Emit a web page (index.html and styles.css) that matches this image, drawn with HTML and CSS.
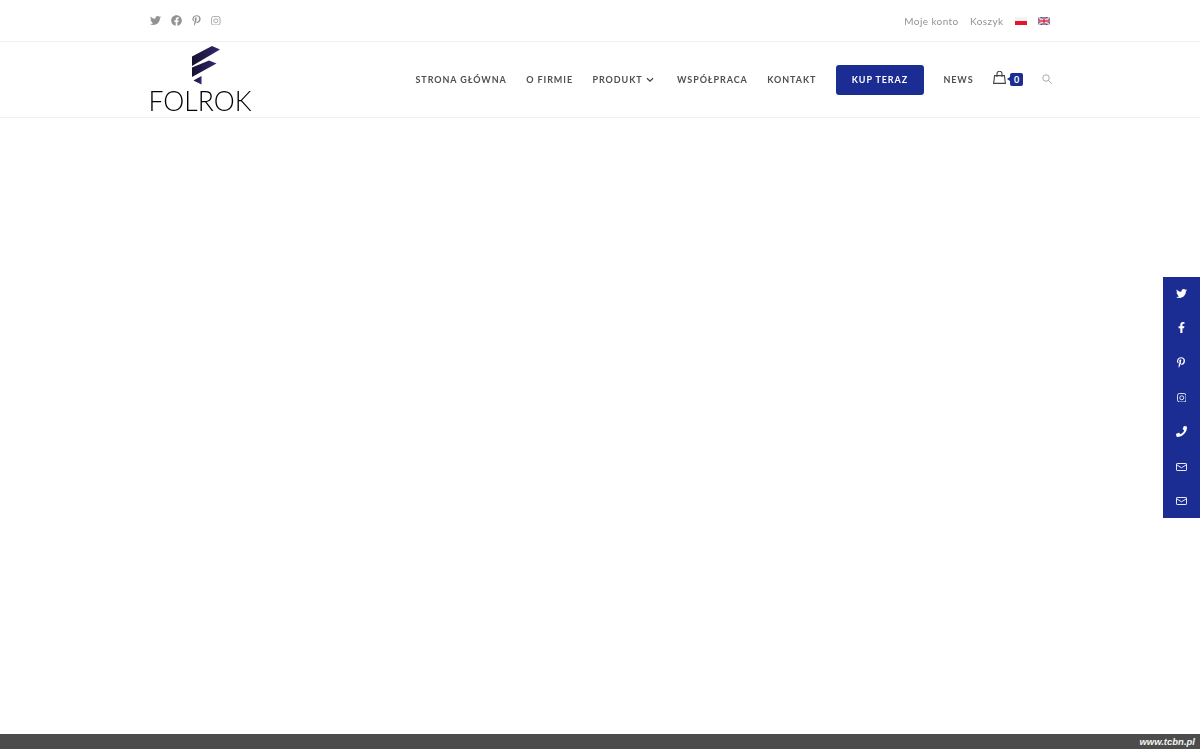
FILE: index.html
```html
<!DOCTYPE html>
<html lang="pl">
<head>
<meta charset="utf-8">
<title>Folrok</title>
<link rel="stylesheet" href="styles.css">
</head>
<body>
<div class="topbar">
  <div class="container topbar-inner">
    <div class="social">
      <svg class="ico-tw" viewBox="0 0 512 512"><path d="M459.37 151.716c.325 4.548.325 9.097.325 13.645 0 138.72-105.583 298.558-298.558 298.558-59.452 0-114.68-17.219-161.137-47.106 8.447.974 16.568 1.299 25.34 1.299 49.055 0 94.213-16.568 130.274-44.832-46.132-.975-84.792-31.188-98.112-72.772 6.498.974 12.995 1.624 19.818 1.624 9.421 0 18.843-1.3 27.614-3.573-48.081-9.747-84.143-51.98-84.143-102.985v-1.299c13.969 7.797 30.214 12.67 47.431 13.319-28.264-18.843-46.781-51.005-46.781-87.391 0-19.492 5.197-37.36 14.294-52.954 51.655 63.675 129.3 105.258 216.365 109.807-1.624-7.797-2.599-15.918-2.599-24.04 0-57.828 46.782-104.934 104.934-104.934 30.213 0 57.502 12.67 76.67 33.137 23.715-4.548 46.456-13.32 66.599-25.34-7.798 24.366-24.366 44.833-46.132 57.827 21.117-2.273 41.584-8.122 60.426-16.243-14.292 20.791-32.161 39.308-52.628 54.253z"/></svg>
      <svg class="ico-fb" viewBox="0 0 512 512"><path d="M504 256C504 119 393 8 256 8S8 119 8 256c0 123.78 90.69 226.38 209.25 245V327.69h-63V256h63v-54.64c0-62.15 37-96.48 93.67-96.48 27.14 0 55.52 4.84 55.52 4.84v61h-31.28c-30.8 0-40.41 19.12-40.41 38.73V256h68.78l-11 71.69h-57.78V501C413.31 482.38 504 379.78 504 256z"/></svg>
      <svg class="ico-pi" viewBox="0 0 384 512"><path d="M204 6.5C101.4 6.5 0 74.9 0 185.6 0 256 39.6 296 63.6 296c9.9 0 15.6-27.6 15.6-35.4 0-9.3-23.7-29.1-23.7-67.8 0-80.4 61.2-137.4 140.4-137.4 68.1 0 118.5 38.7 118.5 109.8 0 53.1-21.3 152.7-90.3 152.7-24.9 0-46.2-18-46.2-43.8 0-37.8 26.4-74.4 26.4-113.4 0-66.2-93.9-54.2-93.9 25.8 0 16.8 2.1 35.4 9.6 50.7-13.8 59.4-42 147.9-42 209.1 0 18.9 2.7 37.5 4.5 56.4 3.4 3.8 1.7 3.4 6.9 1.5 50.4-69 48.6-82.5 71.4-172.8 12.3 23.4 44.1 36 69.3 36 106.2 0 153.9-103.5 153.9-196.8C384 71.3 298.2 6.5 204 6.5z"/></svg>
      <svg class="ico-ig" viewBox="0 0 10 10"><rect x=".5" y=".5" width="9" height="9" rx="2.2"/><circle cx="5" cy="5" r="2.1"/><circle class="dot" cx="7.5" cy="2.5" r=".4"/></svg>
    </div>
    <div class="toplinks">
      <a class="toplink">Moje konto</a>
      <a class="toplink">Koszyk</a>
      <svg class="flag flag-pl" viewBox="0 0 12 8"><rect width="12" height="4" fill="#f4f4f4"/><rect y="4" width="12" height="4" fill="#e5142f"/></svg>
      <svg class="flag" viewBox="0 0 12 8"><rect width="12" height="8" fill="#3a4f9e"/><path d="M0 0l12 8M12 0L0 8" stroke="#fff" stroke-width="1.6"/><path d="M0 0l12 8M12 0L0 8" stroke="#d9404f" stroke-width=".5"/><path d="M6 0v8M0 4h12" stroke="#fff" stroke-width="2.6"/><path d="M6 0v8M0 4h12" stroke="#d8283c" stroke-width="1.4"/></svg>
    </div>
  </div>
</div>
<header class="header">
  <div class="container header-inner">
    <a class="logo">
      <svg class="logo-mark" viewBox="0 0 30 40">
        <defs><linearGradient id="lg" x1="0" y1="0" x2="1" y2="0"><stop offset="0" stop-color="#15132f"/><stop offset="1" stop-color="#35266f"/></linearGradient></defs>
        <polygon fill="url(#lg)" points="1,10.5 21,0 29,3.5 1,20"/>
        <polygon fill="url(#lg)" points="1,21.5 18,14.5 25.5,17.5 1,31"/>
        <polygon fill="url(#lg)" points="10.5,30 10.5,38.5 2.5,34.5"/>
      </svg>
      <span class="logo-text">FOLROK</span>
    </a>
    <nav class="nav">
      <a class="nav-link">Strona Główna</a>
      <a class="nav-link">O firmie</a>
      <a class="nav-link">Produkt<svg class="chev" viewBox="0 0 8 6"><path d="M1 1.2l3 3 3-3"/></svg></a>
      <a class="nav-link">Współpraca</a>
      <a class="nav-link">Kontakt</a>
      <a class="nav-btn">Kup teraz</a>
      <a class="nav-link">News</a>
      <span class="cart">
        <svg class="bag" viewBox="0 0 13 13"><path d="M1.6 4.6h9.8l1 7.8H.6z"/><path d="M4 6V2.8a2.5 2.5 0 0 1 5 0V6"/></svg>
        <span class="badge">0</span>
      </span>
      <svg class="search" viewBox="0 0 12 12"><circle cx="4.8" cy="4.8" r="3.9"/><path d="M7.7 7.7l3.9 3.7"/></svg>
    </nav>
  </div>
</header>
<main class="content"></main>
<aside class="sidebar">
  <a class="side-item"><svg class="s-tw" viewBox="0 0 512 512"><path d="M459.37 151.716c.325 4.548.325 9.097.325 13.645 0 138.72-105.583 298.558-298.558 298.558-59.452 0-114.68-17.219-161.137-47.106 8.447.974 16.568 1.299 25.34 1.299 49.055 0 94.213-16.568 130.274-44.832-46.132-.975-84.792-31.188-98.112-72.772 6.498.974 12.995 1.624 19.818 1.624 9.421 0 18.843-1.3 27.614-3.573-48.081-9.747-84.143-51.98-84.143-102.985v-1.299c13.969 7.797 30.214 12.67 47.431 13.319-28.264-18.843-46.781-51.005-46.781-87.391 0-19.492 5.197-37.36 14.294-52.954 51.655 63.675 129.3 105.258 216.365 109.807-1.624-7.797-2.599-15.918-2.599-24.04 0-57.828 46.782-104.934 104.934-104.934 30.213 0 57.502 12.67 76.67 33.137 23.715-4.548 46.456-13.32 66.599-25.34-7.798 24.366-24.366 44.833-46.132 57.827 21.117-2.273 41.584-8.122 60.426-16.243-14.292 20.791-32.161 39.308-52.628 54.253z"/></svg></a>
  <a class="side-item"><svg class="s-fb" viewBox="0 0 320 512"><path d="M279.14 288l14.22-92.66h-88.91v-60.13c0-25.35 12.42-50.06 52.24-50.06h40.42V6.26S260.43 0 225.36 0c-73.22 0-121.08 44.38-121.08 124.72v70.62H22.89V288h81.39v224h100.17V288z"/></svg></a>
  <a class="side-item"><svg class="s-pi" viewBox="0 0 384 512"><path d="M204 6.5C101.4 6.5 0 74.9 0 185.6 0 256 39.6 296 63.6 296c9.9 0 15.6-27.6 15.6-35.4 0-9.3-23.7-29.1-23.7-67.8 0-80.4 61.2-137.4 140.4-137.4 68.1 0 118.5 38.7 118.5 109.8 0 53.1-21.3 152.7-90.3 152.7-24.9 0-46.2-18-46.2-43.8 0-37.8 26.4-74.4 26.4-113.4 0-66.2-93.9-54.2-93.9 25.8 0 16.8 2.1 35.4 9.6 50.7-13.8 59.4-42 147.9-42 209.1 0 18.9 2.7 37.5 4.5 56.4 3.4 3.8 1.7 3.4 6.9 1.5 50.4-69 48.6-82.5 71.4-172.8 12.3 23.4 44.1 36 69.3 36 106.2 0 153.9-103.5 153.9-196.8C384 71.3 298.2 6.5 204 6.5z"/></svg></a>
  <a class="side-item"><svg class="s-ig" viewBox="0 0 10 10"><rect x=".5" y=".5" width="9" height="9" rx="2.2"/><circle cx="5" cy="5" r="2.1"/></svg></a>
  <a class="side-item"><svg class="s-ph" viewBox="0 0 512 512"><path d="M493.4 24.6l-104-24c-11.3-2.6-22.9 3.3-27.5 13.9l-48 112c-4.2 9.8-1.4 21.3 6.9 28l60.6 49.6c-36 76.7-98.9 140.5-177.2 177.2l-49.6-60.6c-6.8-8.3-18.2-11.1-28-6.9l-112 48C3.9 366.5-2 378.1.6 389.4l24 104C27.1 504.2 36.7 512 48 512c256.1 0 464-207.5 464-464 0-11.2-7.7-20.9-18.6-23.4z"/></svg></a>
  <a class="side-item"><svg class="s-ml" viewBox="0 0 11 8"><rect x=".5" y=".5" width="10" height="7" rx=".6"/><path d="M.7 1.8l4.8 3 4.8-3"/></svg></a>
  <a class="side-item"><svg class="s-ml" viewBox="0 0 11 8"><rect x=".5" y=".5" width="10" height="7" rx=".6"/><path d="M.7 1.8l4.8 3 4.8-3"/></svg></a>
</aside>
<footer class="footbar"><span class="footbar-text">www.tcbn.pl</span></footer>
</body>
</html>
```
FILE: styles.css
```css
* { box-sizing: border-box; }
html, body { height: 100%; }
body {
  margin: 0;
  display: flex;
  flex-direction: column;
  height: 749px;
  overflow: hidden;
  background: #fff;
  font-family: Lato, "Open Sans", sans-serif;
  color: #555;
}
.container { width: 900px; margin: 0 auto; }

.topbar { height: 42px; border-bottom: 1px solid #f1f1f1; flex: none; }
.topbar-inner { height: 41px; display: flex; align-items: center; justify-content: space-between; will-change: opacity; }
.social { display: flex; align-items: center; gap: 10px; }
.social svg { fill: #929292; display: block; }
.ico-tw { width: 11px; height: 11px; }
.ico-fb { width: 11px; height: 11px; }
.ico-pi { width: 9px; height: 11px; }
.ico-ig { width: 9.5px; height: 9.5px; fill: none !important; stroke: #929292; stroke-width: .8; }
.ico-ig .dot { fill: #929292; stroke: none; }
.toplinks { display: flex; align-items: center; }
.toplink { font-size: 10px; letter-spacing: .4px; color: #929292; margin-right: 11.5px; line-height: 14px; }
.flag { width: 12px; height: 8px; display: block; }
.flag-pl { margin-right: 11px; }

.header { height: 76px; border-bottom: 1px solid #f1f1f1; flex: none; }
.header-inner { height: 75px; display: flex; align-items: center; justify-content: space-between; will-change: opacity; }
.logo { display: flex; flex-direction: column; align-items: center; width: 100px; height: 75px; padding-top: 4px; }
.logo-mark { width: 30px; height: 40px; display: block; margin-left: 11px; }
.logo-text { font-weight: 300; font-size: 26.5px; line-height: 24px; color: #000; margin-top: 3px; letter-spacing: 0; white-space: nowrap; }

.nav { display: flex; align-items: center; margin-right: -2px; }
.nav-link { font-size: 9px; font-weight: 700; letter-spacing: .92px; text-transform: uppercase; color: #505050; margin-right: 19.5px; white-space: nowrap; display: flex; align-items: center; }
.chev { width: 8px; height: 6px; margin-left: 3.5px; margin-right: 3.5px; fill: none; stroke: #444; stroke-width: 1.3; }
.nav-btn { width: 88px; height: 30px; background: #1b2d93; border-radius: 3px; color: #fff; font-size: 9px; font-weight: 700; letter-spacing: .9px; text-transform: uppercase; display: flex; align-items: center; justify-content: center; margin-right: 19.5px; }
.cart { display: flex; align-items: center; margin-right: 19px; position: relative; }
.bag { width: 13px; height: 13px; fill: none; stroke: #444; stroke-width: 1.1; display: block; margin-top: -4px; }
.badge { width: 13px; height: 13px; margin-left: 4px; background: #1b2d93; border-radius: 2px; color: #fff; font-size: 9px; font-weight: 700; line-height: 13px; text-align: center; position: relative; }
.badge::before { content: ""; position: absolute; left: -3px; top: 4px; border: 2.5px solid transparent; border-left: 0; border-right: 3px solid #1b2d93; }
.search { width: 10px; height: 10px; fill: none; stroke: #8c8c8c; stroke-width: .9; display: block; margin-top: -2px; }

.content { flex: 1; }

.sidebar { position: fixed; top: 277px; right: 0; width: 37.5px; height: 241px; background: #1b2d93; display: flex; flex-direction: column; overflow: hidden; }
.side-item { flex: none; height: 34.67px; display: flex; align-items: center; justify-content: center; }
.side-item:first-child { margin-top: -1px; }
.side-item svg { display: block; fill: #fff; }
.s-tw { width: 11px; height: 11px; }
.s-fb { width: 7px; height: 11px; }
.s-pi { width: 8px; height: 11px; }
.s-ig { width: 9.5px; height: 9.5px; fill: none !important; stroke: #fff; stroke-width: .9; }
.s-ph { width: 11px; height: 11px; }
.s-ml { width: 11px; height: 8px; fill: none !important; stroke: #fff; stroke-width: .9; }

.footbar { height: 15px; flex: none; background: #4c4c4c; display: flex; align-items: center; justify-content: flex-end; padding-right: 5px; }
.footbar-text { font-family: "Liberation Sans", sans-serif; font-size: 9.5px; font-weight: 700; font-style: italic; color: #f2f2f2; letter-spacing: 0; }
```
